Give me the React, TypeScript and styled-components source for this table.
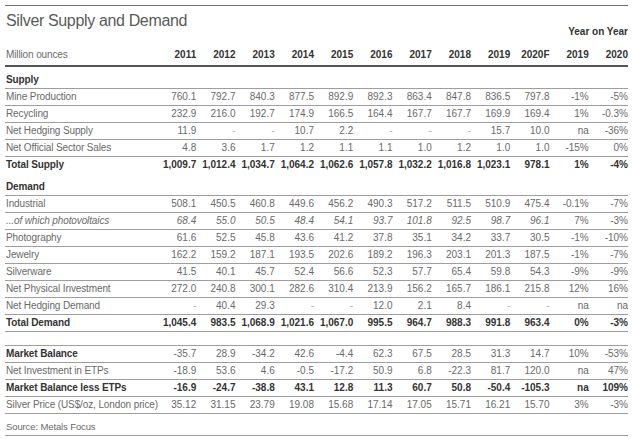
import React from "react";
import styled, { createGlobalStyle, css } from "styled-components";

const GlobalStyle = createGlobalStyle`
  body {
    margin: 0;
    background: #fff;
    font-family: "Liberation Sans", Arial, sans-serif;
  }
`;

type Kind = "section" | "item" | "total" | "gap" | "source";

type Row = {
  kind: Kind;
  label?: string;
  values?: string[];
  boldLabel?: boolean;
  boldValues?: boolean;
  italic?: boolean;
  line?: boolean;
};

const years = ["2011", "2012", "2013", "2014", "2015", "2016", "2017", "2018", "2019", "2020F", "2019", "2020"];

const split = (s: string) => s.split(" ");

const rows: Row[] = [
  { kind: "section", label: "Supply", line: true },
  { kind: "item", label: "Mine Production", values: split("760.1 792.7 840.3 877.5 892.9 892.3 863.4 847.8 836.5 797.8 -1% -5%"), line: true },
  { kind: "item", label: "Recycling", values: split("232.9 216.0 192.7 174.9 166.5 164.4 167.7 167.7 169.9 169.4 1% -0.3%"), line: true },
  { kind: "item", label: "Net Hedging Supply", values: split("11.9 - - 10.7 2.2 - - - 15.7 10.0 na -36%"), line: true },
  { kind: "item", label: "Net Official Sector Sales", values: split("4.8 3.6 1.7 1.2 1.1 1.1 1.0 1.2 1.0 1.0 -15% 0%"), line: true },
  { kind: "total", label: "Total Supply", values: split("1,009.7 1,012.4 1,034.7 1,064.2 1,062.6 1,057.8 1,032.2 1,016.8 1,023.1 978.1 1% -4%"), boldLabel: true, boldValues: true },
  { kind: "section", label: "Demand", line: true },
  { kind: "item", label: "Industrial", values: split("508.1 450.5 460.8 449.6 456.2 490.3 517.2 511.5 510.9 475.4 -0.1% -7%"), line: true },
  { kind: "item", label: "...of which photovoltaics", values: split("68.4 55.0 50.5 48.4 54.1 93.7 101.8 92.5 98.7 96.1 7% -3%"), italic: true, line: true },
  { kind: "item", label: "Photography", values: split("61.6 52.5 45.8 43.6 41.2 37.8 35.1 34.2 33.7 30.5 -1% -10%"), line: true },
  { kind: "item", label: "Jewelry", values: split("162.2 159.2 187.1 193.5 202.6 189.2 196.3 203.1 201.3 187.5 -1% -7%"), line: true },
  { kind: "item", label: "Silverware", values: split("41.5 40.1 45.7 52.4 56.6 52.3 57.7 65.4 59.8 54.3 -9% -9%"), line: true },
  { kind: "item", label: "Net Physical Investment", values: split("272.0 240.8 300.1 282.6 310.4 213.9 156.2 165.7 186.1 215.8 12% 16%"), line: true },
  { kind: "item", label: "Net Hedging Demand", values: split("- 40.4 29.3 - - 12.0 2.1 8.4 - - na na"), line: true },
  { kind: "item", label: "Total Demand", values: split("1,045.4 983.5 1,068.9 1,021.6 1,067.0 995.5 964.7 988.3 991.8 963.4 0% -3%"), boldLabel: true, boldValues: true, line: true },
  { kind: "gap", line: true },
  { kind: "item", label: "Market Balance", values: split("-35.7 28.9 -34.2 42.6 -4.4 62.3 67.5 28.5 31.3 14.7 10% -53%"), boldLabel: true, line: true },
  { kind: "item", label: "Net Investment in ETPs", values: split("-18.9 53.6 4.6 -0.5 -17.2 50.9 6.8 -22.3 81.7 120.0 na 47%"), line: true },
  { kind: "item", label: "Market Balance less ETPs", values: split("-16.9 -24.7 -38.8 43.1 12.8 11.3 60.7 50.8 -50.4 -105.3 na 109%"), boldLabel: true, boldValues: true, line: true },
  { kind: "item", label: "Silver Price (US$/oz, London price)", values: split("35.12 31.15 23.79 19.08 15.68 17.14 17.05 15.71 16.21 15.70 3% -3%"), line: true },
  { kind: "source", label: "Source: Metals Focus", line: true },
];

const Page = styled.div`
  width: 623px;
  margin: 5px 5px 0;
`;

const TitleBar = styled.div`
  display: flex;
  justify-content: space-between;
  align-items: flex-end;
  border-top: 1px solid #707070;
  padding-top: 5px;
`;

const Title = styled.h1`
  margin: 0 0 7px 1px;
  font-size: 16px;
  line-height: 20px;
  font-weight: 400;
  letter-spacing: -0.35px;
  color: #5a5a5a;
`;

const YoY = styled.div`
  font-size: 10px;
  line-height: 12px;
  font-weight: 700;
  color: #333;
`;

const Table = styled.table`
  width: 623px;
  table-layout: fixed;
  border-collapse: separate;
  border-spacing: 0;
  font-size: 10px;
  line-height: 12px;
  white-space: nowrap;
`;

const HeadCell = styled.th<{ $label?: boolean }>`
  padding: 11px 0 4px ${(p) => (p.$label ? "1px" : "0")};
  text-align: ${(p) => (p.$label ? "left" : "right")};
  font-weight: ${(p) => (p.$label ? 400 : 700)};
  letter-spacing: ${(p) => (p.$label ? "-0.12px" : "0")};
  color: ${(p) => (p.$label ? "#6a6a6a" : "#333")};
  border-bottom: 2px solid #555;
`;

const padFor: Record<Kind, string> = {
  section: "7px 0 2px",
  item: "2px 0 2px",
  total: "2px 0 3px",
  gap: "13px 0 0",
  source: "7px 0 2px",
};

const cellBase = css<{ $kind: Kind; $line?: boolean }>`
  padding: ${(p) => padFor[p.$kind]};
  border-bottom: ${(p) => (p.$line ? "1px solid #9e9e9e" : "0")};
  overflow: visible;
`;

const LabelCell = styled.td<{ $kind: Kind; $line?: boolean; $bold?: boolean; $italic?: boolean }>`
  ${cellBase};
  padding-left: 1px;
  text-align: left;
  letter-spacing: -0.12px;
  font-weight: ${(p) => (p.$bold || p.$kind === "section" ? 700 : 400)};
  font-style: ${(p) => (p.$italic ? "italic" : "normal")};
  color: ${(p) => (p.$bold || p.$kind === "section" ? "#333" : "#6a6a6a")};
  font-size: ${(p) => (p.$kind === "source" ? "9.5px" : "10px")};
`;

const ValueCell = styled.td<{ $kind: Kind; $line?: boolean; $bold?: boolean; $italic?: boolean; $dash?: boolean }>`
  ${cellBase};
  text-align: right;
  font-weight: ${(p) => (p.$bold ? 700 : 400)};
  font-style: ${(p) => (p.$italic ? "italic" : "normal")};
  color: ${(p) => (p.$bold ? "#333" : p.$dash ? "#b0b0b0" : "#6a6a6a")};
`;

export default function App() {
  return (
    <>
      <GlobalStyle />
      <Page>
        <TitleBar>
          <Title>Silver Supply and Demand</Title>
          <YoY>Year on Year</YoY>
        </TitleBar>
        <Table>
          <colgroup>
            <col style={{ width: 152 }} />
            {years.map((_, i) => (
              <col key={i} />
            ))}
          </colgroup>
          <thead>
            <tr>
              <HeadCell $label>Million ounces</HeadCell>
              {years.map((y, i) => (
                <HeadCell key={i}>{y}</HeadCell>
              ))}
            </tr>
          </thead>
          <tbody>
            {rows.map((r, i) => {
              if (r.kind === "gap" || r.kind === "section" || r.kind === "source") {
                return (
                  <tr key={i}>
                    <LabelCell $kind={r.kind} $line={r.line} colSpan={13}>
                      {r.label}
                    </LabelCell>
                  </tr>
                );
              }
              return (
                <tr key={i}>
                  <LabelCell $kind={r.kind} $line={r.line} $bold={r.boldLabel} $italic={r.italic}>
                    {r.label}
                  </LabelCell>
                  {r.values!.map((v, j) => (
                    <ValueCell
                      key={j}
                      $kind={r.kind}
                      $line={r.line}
                      $bold={r.boldValues}
                      $italic={r.italic && j < 10}
                      $dash={v === "-"}
                    >
                      {v}
                    </ValueCell>
                  ))}
                </tr>
              );
            })}
          </tbody>
        </Table>
      </Page>
    </>
  );
}
